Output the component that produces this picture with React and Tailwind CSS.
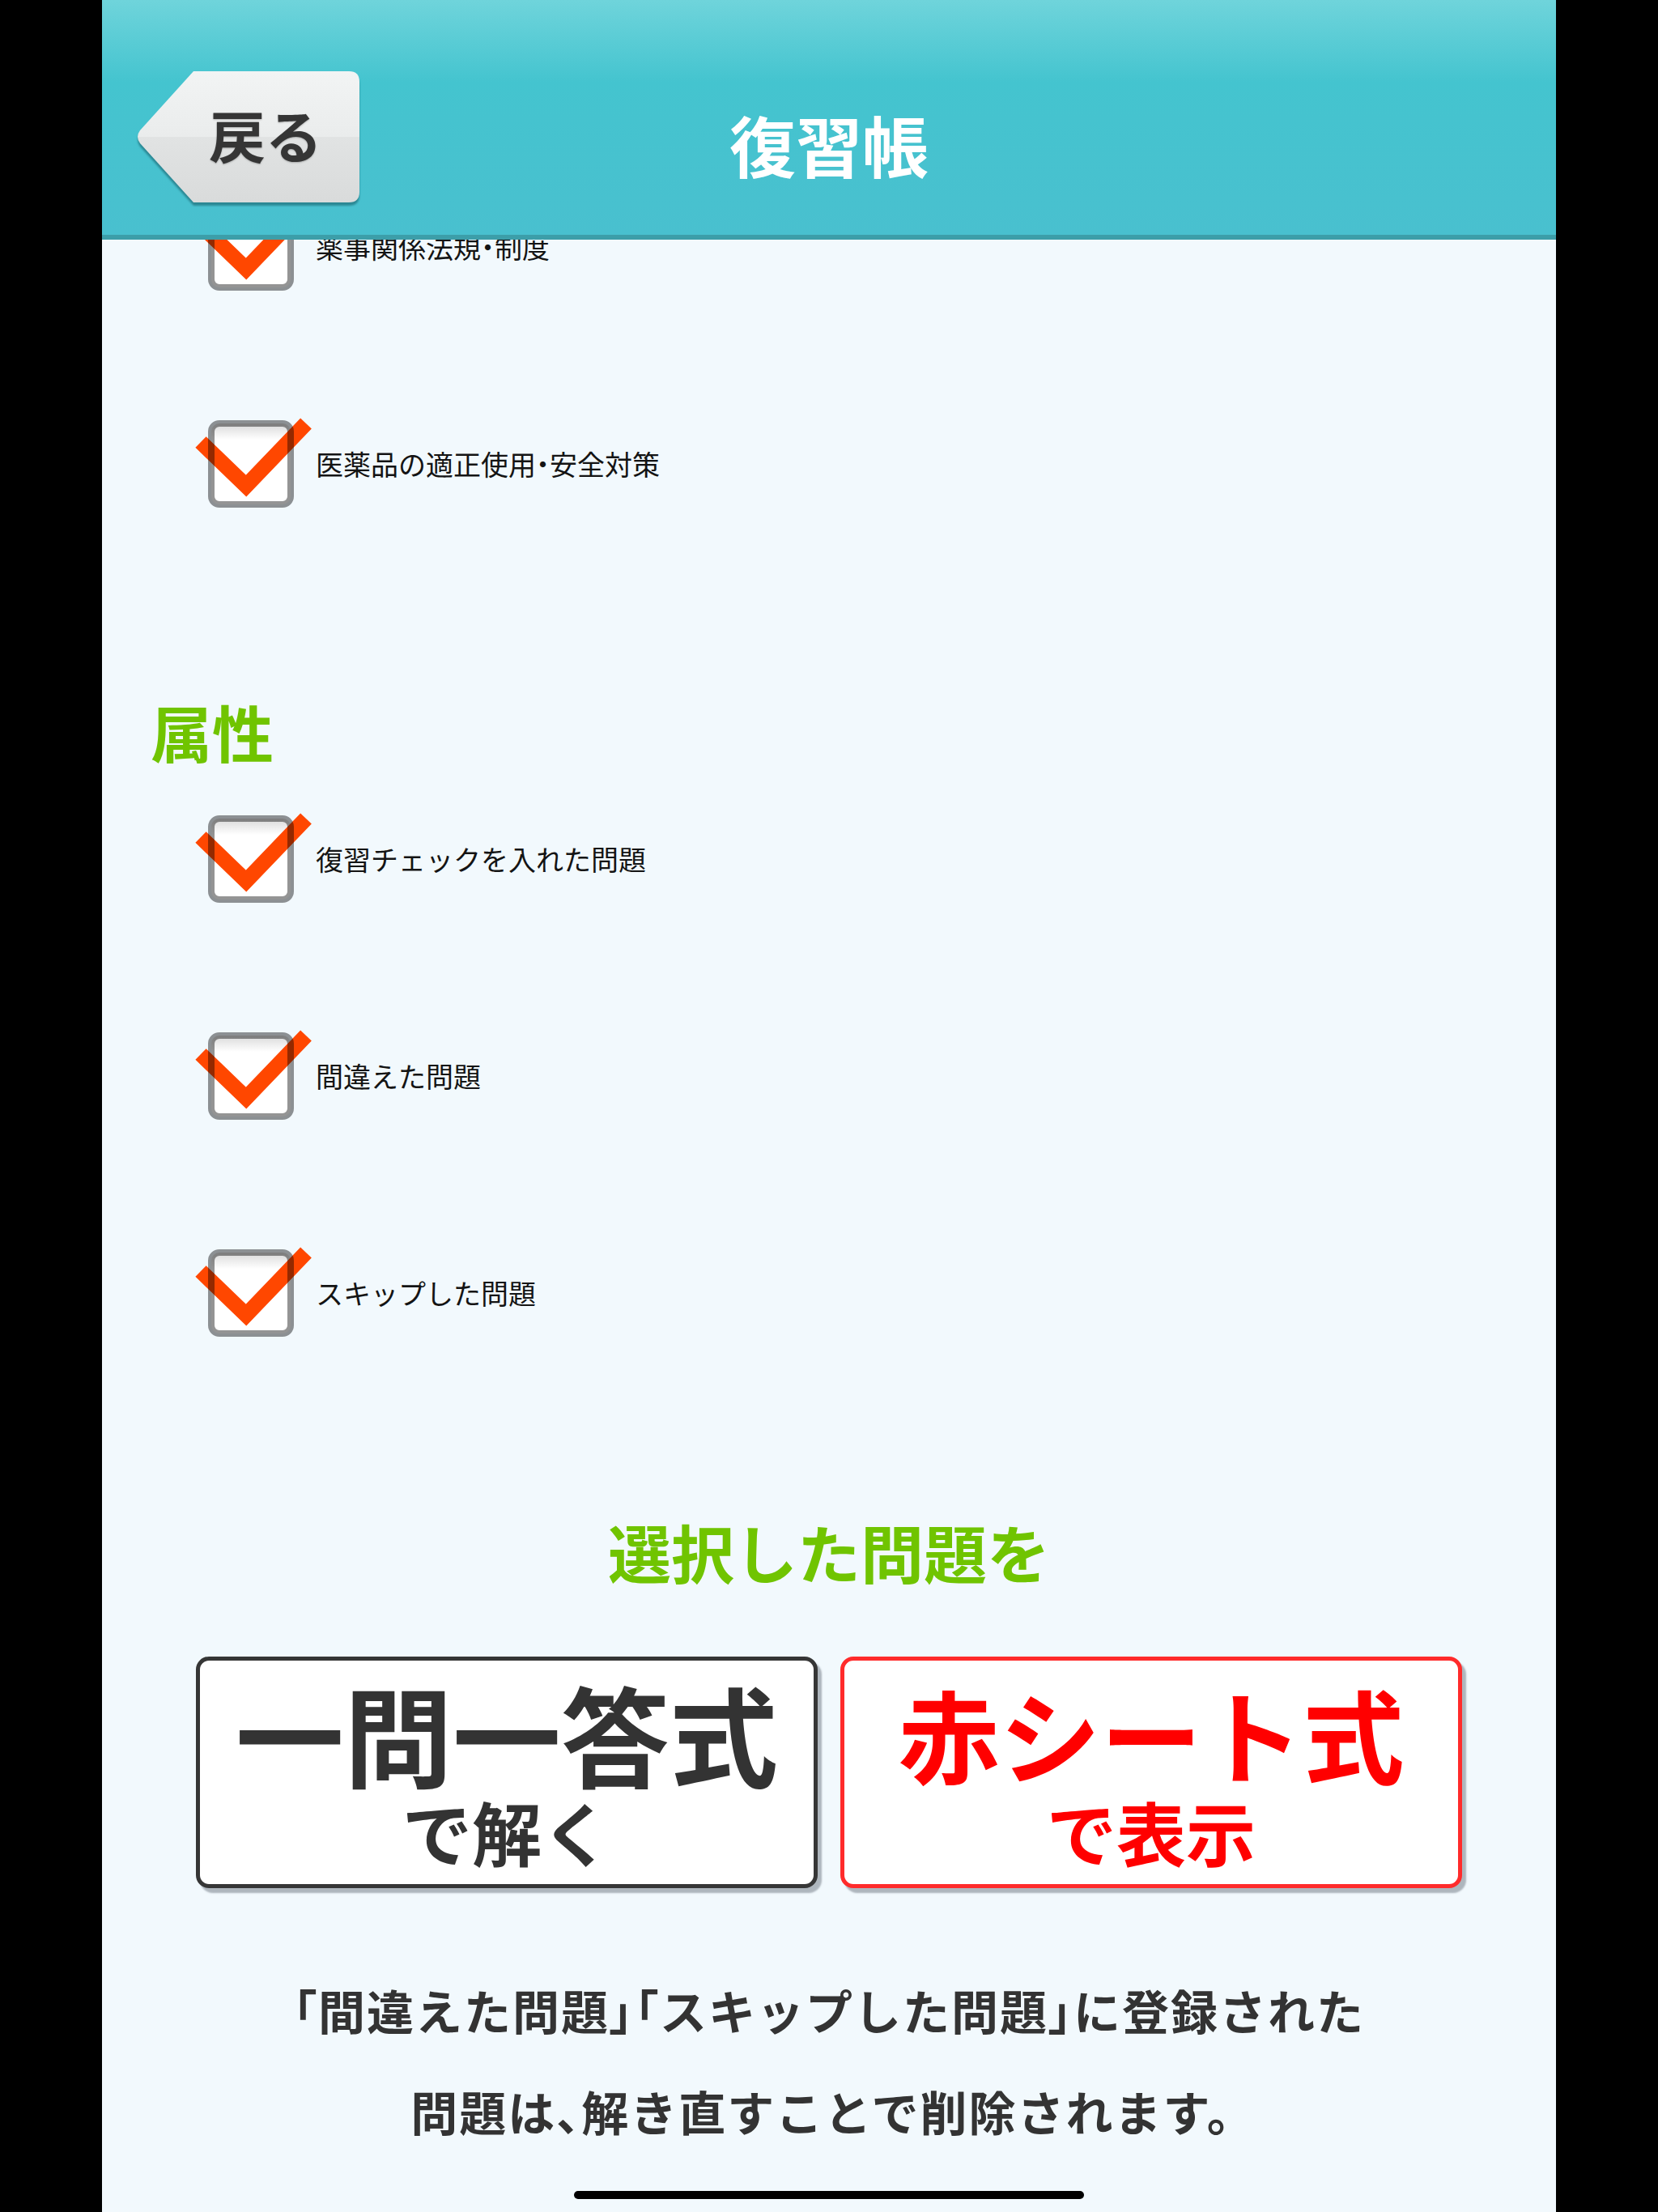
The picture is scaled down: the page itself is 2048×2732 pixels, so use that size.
import { useId } from 'react';

const font = "font-['Noto_Sans_CJK_JP','Noto_Sans',sans-serif]";

function CheckIcon() {
  const id = useId();
  return (
    <svg width="150" height="130" viewBox="-20 -11 150 130" className="shrink-0">
      <defs>
        <linearGradient id={id} x1="0" y1="0" x2="0" y2="1">
          <stop offset="0" stopColor="#d9d9d9" />
          <stop offset="0.2" stopColor="#ffffff" />
          <stop offset="1" stopColor="#ffffff" />
        </linearGradient>
      </defs>
      <rect x="4" y="4" width="98" height="100" rx="10" fill={`url(#${id})`} />
      <polyline
        points="-9,27 47,81 121,4"
        fill="none"
        stroke="#ff4700"
        strokeWidth="19"
        strokeLinejoin="miter"
        strokeMiterlimit="10"
      />
      <rect x="4" y="4" width="98" height="100" rx="10" fill="none" stroke="rgba(0,0,0,0.42)" strokeWidth="8" />
    </svg>
  );
}

function Dot() {
  return <span className="[font-feature-settings:'palt']">・</span>;
}

function Item({ children, className = '' }) {
  return (
    <div className={`flex h-[130px] items-center pl-[111px] ${className}`}>
      <CheckIcon />
      <span className="ml-[3px] text-[34px] leading-none text-[#141414]">{children}</span>
    </div>
  );
}

function BackButton() {
  const id = useId();
  return (
    <button className="relative mt-[87px] ml-[41px] flex h-[164px] w-[278px] items-center justify-center pl-[44px]">
      <svg
        width="278"
        height="164"
        viewBox="0 0 278 164"
        className="absolute inset-0 drop-shadow-[0_4px_1px_rgba(20,90,100,0.55)]"
      >
        <defs>
          <linearGradient id={id} x1="0" y1="0" x2="0" y2="1">
            <stop offset="0" stopColor="#f2f4f4" />
            <stop offset="0.5" stopColor="#eaecec" />
            <stop offset="0.5" stopColor="#e1e3e3" />
            <stop offset="1" stopColor="#d9dbdb" />
          </linearGradient>
        </defs>
        <path d="M72 1 L264 1 Q277 1 277 14 L277 150 Q277 163 264 163 L72 163 L6 90 Q0 82 6 74 Z" fill={`url(#${id})`} />
      </svg>
      <span className="relative -mt-[6px] text-[70px] font-bold leading-none text-[#353535] [text-shadow:0_1px_2px_rgba(0,0,0,0.25)]">
        戻る
      </span>
    </button>
  );
}

export default function App() {
  return (
    <div className={`relative h-[2732px] overflow-hidden bg-black ${font}`}>
      <div className="mx-auto flex h-full w-[1796px] flex-col bg-[#f2f9fd]">
        <header className="relative z-10 grid h-[296px] shrink-0 grid-cols-[1fr_auto_1fr] border-b-[6px] border-[#3c9ea9] bg-[linear-gradient(to_bottom,#6fd4db_0%,#44c4cf_35%,#49c0cf_100%)]">
          <div className="flex items-start">
            <BackButton />
          </div>
          <h1 className="mt-[137px] text-[82px] font-bold leading-none text-white">復習帳</h1>
          <div />
        </header>

        <main className="flex-1 overflow-hidden">
          <Item className="mt-[-56px]">
            薬事関係法規<Dot />制度
          </Item>
          <Item className="mt-[138px]">
            医薬品の適正使用<Dot />安全対策
          </Item>

          <h2 className="mt-[225px] pl-[60px] text-[76px] font-bold leading-[80px] text-[#70c400]">属性</h2>

          <Item className="mt-[53px]">復習チェックを入れた問題</Item>
          <Item className="mt-[138px]">間違えた問題</Item>
          <Item className="mt-[138px]">スキップした問題</Item>

          <p className="mt-[209px] text-center text-[78px] font-bold leading-[90px] text-[#70c400]">選択した問題を</p>

          <div className="mx-[116px] mt-[85px] grid grid-cols-2 gap-[28px]">
            <button className="flex h-[286px] flex-col items-center justify-center rounded-[16px] border-[5px] border-[#363636] bg-white shadow-[5px_6px_2px_rgba(90,100,110,0.45)]">
              <span className="text-[134px] font-bold leading-[134px] text-[#333333]">一問一答式</span>
              <span className="mt-[12px] text-[86px] font-bold leading-[86px] text-[#333333]">で解く</span>
            </button>
            <button className="flex h-[286px] flex-col items-center justify-center rounded-[16px] border-[5px] border-[#ff2b2b] bg-white shadow-[5px_6px_2px_rgba(90,100,110,0.45)]">
              <span className="text-[125px] font-bold leading-[134px] text-[#ff0000]">赤シート式</span>
              <span className="mt-[12px] text-[86px] font-bold leading-[86px] text-[#ff0000]">で表示</span>
            </button>
          </div>

          <div className="mt-[88px] text-center text-[58px] font-bold leading-[125px] tracking-[2px] text-[#333333]">
            <div>
              <span className="[font-feature-settings:'palt']">「</span>間違えた問題
              <span className="[font-feature-settings:'palt']">」「</span>スキップした問題
              <span className="[font-feature-settings:'palt']">」</span>に登録された
            </div>
            <div className="pl-[10px]">
              問題は<span className="[font-feature-settings:'palt']">、</span>解き直すことで削除されます。
            </div>
          </div>
        </main>
      </div>

      <div className="absolute bottom-[16px] left-1/2 h-[10px] w-[630px] -translate-x-1/2 rounded-full bg-black" />
    </div>
  );
}
